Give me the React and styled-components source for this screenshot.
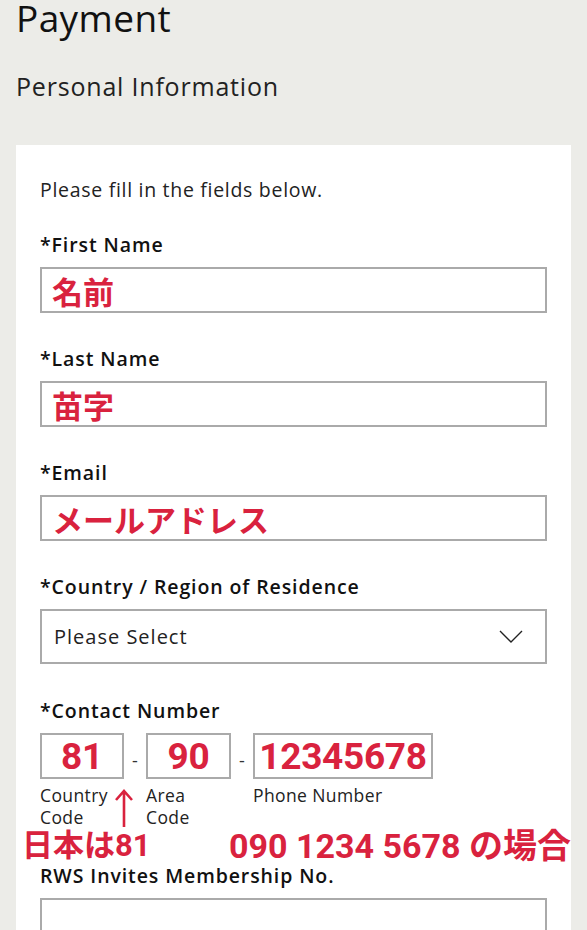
import React from 'react'
import styled, { createGlobalStyle } from 'styled-components'

const Global = createGlobalStyle`
	body {
		margin: 0;
		background: #ecece8;
		font-family: "Open Sans", "Noto Sans", sans-serif;
		color: #111;
	}
`

const RED = '#d9223e'

function Field({ label, value, top = 34, children }) {
	return (
		<FieldWrap top={top}>
			<Label>{label}</Label>
			{children || <Input>{value}</Input>}
		</FieldWrap>
	)
}

function Chevron() {
	return (
		<svg width="24" height="14" viewBox="0 0 24 14">
			<path d="M1 1 L12 12 L23 1" fill="none" stroke="#222" strokeWidth="1.4" />
		</svg>
	)
}

function App() {
	return (
		<Page>
			<Global />
			<Title>Payment</Title>
			<SubTitle>Personal Information</SubTitle>
			<Card>
				<Intro>Please fill in the fields below.</Intro>
				<Field label="*First Name" value="名前" top={31} />
				<Field label="*Last Name" value="苗字" />
				<Field label="*Email" value="メールアドレス" />
				<Field label="*Country / Region of Residence">
					<Select>
						<span>Please Select</span>
						<Chevron />
					</Select>
				</Field>
				<Contact>
					<Label>*Contact Number</Label>
					<PhoneRow>
						<PhoneCol>
							<PhoneBox width={84}>81</PhoneBox>
							<Hint>Country<br />Code</Hint>
						</PhoneCol>
						<Dash>-</Dash>
						<PhoneCol>
							<PhoneBox width={85}>90</PhoneBox>
							<Hint>Area<br />Code</Hint>
						</PhoneCol>
						<Dash>-</Dash>
						<PhoneCol>
							<PhoneBox width={180}>12345678</PhoneBox>
							<Hint>Phone Number</Hint>
						</PhoneCol>
						<Arrow>
							<svg width="20" height="40" viewBox="0 0 20 40">
								<path d="M10 39 L10 3 M2 12 L10 3 L18 12" fill="none" stroke={RED} strokeWidth="2.6" />
							</svg>
						</Arrow>
					</PhoneRow>
					<Notes>
						<Note size={31}>日本は81</Note>
						<Note size={34}>090 1234 5678 の場合</Note>
					</Notes>
				</Contact>
				<Field label="RWS Invites Membership No." top={2}>
					<Input />
				</Field>
			</Card>
		</Page>
	)
}

const Page = styled.div`
	width: 587px;
	height: 930px;
	overflow: hidden;
`
const Title = styled.h1`
	margin: -4px 0 0 16px;
	font-size: 37px;
	line-height: 44px;
	font-weight: 500;
	letter-spacing: 0.4px;
	color: #111;
`
const SubTitle = styled.h2`
	margin: 30px 0 0 16px;
	font-size: 25px;
	line-height: 32px;
	font-weight: 400;
	letter-spacing: 0.8px;
	color: #222;
`
const Card = styled.div`
	margin: 43px 16px 0;
	background: #fff;
	padding: 33px 24px 0;
	min-height: 900px;
`
const Intro = styled.p`
	margin: 0;
	font-size: 19.5px;
	line-height: 24px;
	letter-spacing: 0.7px;
	color: #222;
`
const FieldWrap = styled.div`
	margin-top: ${p => p.top}px;
`
const Label = styled.div`
	font-size: 19.5px;
	line-height: 24px;
	font-weight: 600;
	letter-spacing: 0.9px;
	color: #111;
	margin-bottom: 10px;
`
const Input = styled.div`
	box-sizing: border-box;
	height: 46px;
	border: 2px solid #aaa;
	padding: 0 10px;
	display: flex;
	align-items: center;
	font-family: "Noto Sans CJK JP", sans-serif;
	font-weight: 700;
	font-size: 31px;
	color: ${RED};
`
const Select = styled.div`
	box-sizing: border-box;
	height: 55px;
	border: 2px solid #aaa;
	padding: 0 22px 0 12px;
	display: flex;
	align-items: center;
	justify-content: space-between;
	font-size: 20px;
	letter-spacing: 1px;
	color: #222;
`
const Contact = styled.div`
	margin-top: 35px;
`
const PhoneRow = styled.div`
	position: relative;
	display: flex;
	align-items: flex-start;
`
const PhoneCol = styled.div`
	display: flex;
	flex-direction: column;
`
const PhoneBox = styled.div`
	box-sizing: border-box;
	width: ${p => p.width}px;
	height: 46px;
	border: 2px solid #aaa;
	display: flex;
	align-items: center;
	justify-content: center;
	font-family: "Roboto", sans-serif;
	font-weight: 700;
	font-size: 37px;
	letter-spacing: -0.3px;
	color: ${RED};
`
const Dash = styled.div`
	width: 22px;
	height: 46px;
	display: flex;
	align-items: center;
	justify-content: center;
	font-size: 18px;
	color: #333;
	padding-top: 8px;
	box-sizing: border-box;
`
const Hint = styled.div`
	margin-top: 5px;
	font-size: 17.5px;
	line-height: 22px;
	letter-spacing: 0.4px;
	color: #222;
`
const Arrow = styled.div`
	position: absolute;
	left: 74px;
	top: 55px;
`
const Notes = styled.div`
	display: flex;
	justify-content: space-between;
	align-items: center;
	margin: 2px -24px 0 -18px;
`
const Note = styled.div`
	font-family: "Roboto", "Noto Sans CJK JP", sans-serif;
	font-weight: 700;
	font-size: ${p => p.size}px;
	line-height: 32px;
	color: ${RED};
	white-space: nowrap;
`
export default App
